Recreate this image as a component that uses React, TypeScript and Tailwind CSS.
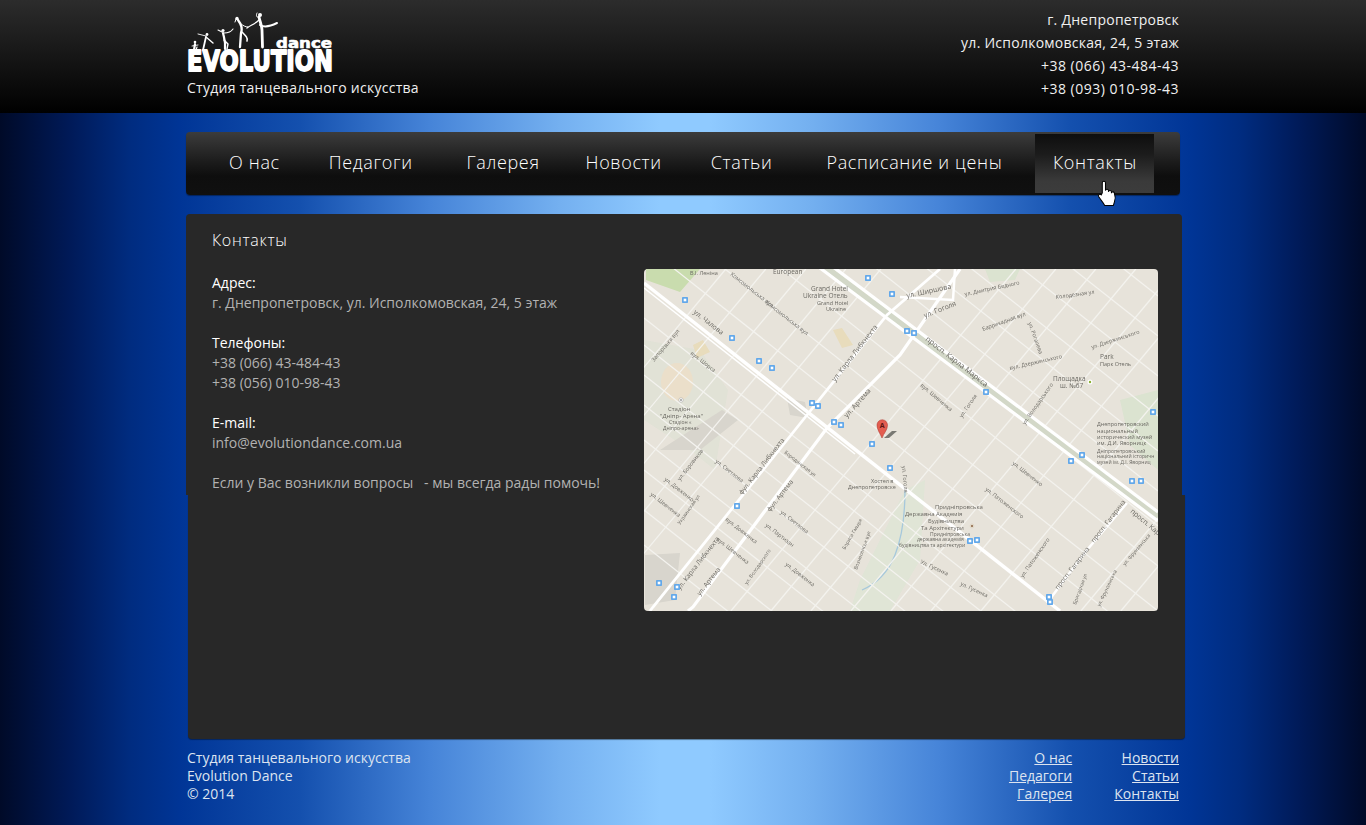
import React from "react";

const famA = [-150,-110,-70,-30,10,45,85,120,160,205,245,318,345,375,405,440,470,510,545];
const famB = [950,990,1030,1070,1105,1240,1280,1320,1360,1400,1440,1490,1590,1630,1670];

const labels: [number, number, number, string, number][] = [
  [690, 275, 0, "В.І. Леніна", 5.5],
  [773, 274, 0, "European", 6.5],
  [811, 291, 0, "Grand Hotel", 6.5],
  [803, 298, 0, "Ukraine Отель", 6.5],
  [817, 305, 0, "Grand Hotel", 5.5],
  [826, 311, 0, "Ukraine", 5.5],
  [693, 313, 38, "ул. Чалова", 7],
  [730, 275, 38, "Комсомольська вул", 5.5],
  [765, 303, 38, "Комсомольська вул", 5.5],
  [654, 362, -50, "Запорізька вул", 5.5],
  [690, 354, 38, "вул. Шорса", 5.5],
  [668, 411, 0, "Стадіон", 6],
  [660, 418, 0, "\"Дніпр- Арена\"", 6],
  [669, 424, 0, "Стадіон «", 5],
  [663, 430, 0, "Дніпро-арена»", 5],
  [835, 382, -52, "ул. Карла Либкнехта", 7],
  [847, 418, -48, "ул. Артема", 7],
  [907, 298, -12, "ул. Ширшова", 7],
  [925, 318, -22, "ул. Гоголя", 7],
  [965, 296, -12, "ул. Дмитрия Бедного", 5.5],
  [1056, 299, -8, "Колодезная ул", 5.5],
  [983, 331, -20, "Баррикадная вул", 5.5],
  [1028, 323, 70, "ул. Рогалева", 5.5],
  [1010, 370, -13, "вул. Дзержинського", 5.5],
  [1092, 349, -18, "ул. Дзержинського", 5.5],
  [1100, 359, 0, "Park", 6.5],
  [1100, 366, 0, "Парк Отель", 5.5],
  [1053, 381, 0, "Площадка", 6.5],
  [1060, 388, 0, "ш. №67", 6.5],
  [925, 340, 38, "просп. Карла Маркса", 7.5],
  [920, 386, 40, "вул. Шевченка", 5.5],
  [962, 418, -55, "ул. Гоголя", 5.5],
  [1025, 425, -55, "ул. Володарського", 5.5],
  [1097, 426, 0, "Днепропетровский", 5.5],
  [1097, 433, 0, "национальный", 5.5],
  [1097, 439, 0, "исторический музей", 5.5],
  [1097, 445, 0, "им. Д.И. Яворницк", 5.5],
  [1097, 453, 0, "Дніпропетровський", 5],
  [1097, 458, 0, "національний історичн", 5],
  [1097, 464, 0, "музей ім. Д.І. Яворниц", 5],
  [680, 481, -52, "ул. Боровиков", 5.5],
  [664, 480, 38, "ул. Довженко", 5.5],
  [650, 495, 38, "ул. Шевченка", 5.5],
  [680, 525, -55, "Украинская ул", 5],
  [715, 462, 38, "ул. Светлова", 5.5],
  [742, 495, -52, "фул. Карла Либкнехта", 6.5],
  [770, 512, -52, "фул. Артема", 6.5],
  [780, 513, 38, "ул. Светлова", 5.5],
  [725, 520, 38, "вул. Довженка", 5.5],
  [680, 590, -52, "ул. Карла Либкнехта", 6.5],
  [700, 596, -52, "ул. Артема", 6.5],
  [765, 526, 38, "ул. Партизан", 5.5],
  [747, 585, -55, "ул. Володарского", 5],
  [785, 565, 38, "ул. Довженка", 5.5],
  [716, 540, 38, "вул. Шевченка", 5.5],
  [784, 453, 38, "Бородинская ул", 5],
  [871, 483, 0, "Хостел в", 5.5],
  [848, 489, 0, "Днепропетровске", 5.5],
  [845, 550, -60, "Бориса Гмыря", 5],
  [857, 570, -70, "Вознесенськ вул", 5],
  [902, 466, 85, "ул. Гоголя", 5.5],
  [1012, 464, 38, "ул. Шевченко", 5.5],
  [985, 490, 38, "ул. Патоженского", 5.5],
  [935, 509, 0, "Придніпровська", 6],
  [905, 516, 0, "Державна Академія", 6],
  [928, 523, 0, "Будівництва", 6],
  [921, 530, 0, "Та Архітектури", 6],
  [930, 536, 0, "Придніпровська", 5],
  [917, 541, 0, "державна академія", 5],
  [899, 547, 0, "будівництва та архітектури", 5],
  [920, 563, 25, "Ул. Гусенка", 5.5],
  [960, 585, 25, "ул. Гусенка", 5.5],
  [1023, 578, -55, "ул. Патоженского", 5.5],
  [1058, 590, -52, "просп. Гагарина", 6.5],
  [1094, 543, -52, "просп. Гагарина", 6.5],
  [1130, 512, 40, "просп. Кар", 7],
  [1076, 605, -70, "Бригадная ул", 5],
  [1100, 607, -65, "ул. Фрунзенська", 5],
  [1125, 566, -50, "ул. Фрунзенська", 5],
];

const stops: [number, number][] = [
  [685,300],[732,338],[759,361],[772,368],[812,403],[818,406],[834,422],[841,425],
  [868,278],[892,294],[907,331],[914,333],[986,392],[1153,412],[872,444],[890,468],
  [737,506],[659,583],[677,587],[674,597],[1082,455],[1071,461],[1132,481],[1141,481],
  [970,541],[977,540],[1049,597],[1050,602],
];

function MapImage() {
  return (
    <svg viewBox="644 269 514 342" className="block w-full h-full">
      <defs>
        <filter id="soft"><feGaussianBlur stdDeviation="0.4" /></filter>
        <clipPath id="map"><rect x="644" y="269" width="514" height="342" /></clipPath>
      </defs>
      <g clipPath="url(#map)">
        <rect x="644" y="269" width="514" height="342" fill="#e7e3da" />
        <g filter="url(#soft)">
          <polygon points="646,269 700,269 680,292 646,280" fill="#c9dcae" />
          <polygon points="644,340 700,350 728,390 715,470 690,450 644,420" fill="#e1e2d6" />
          <ellipse cx="677" cy="382" rx="16" ry="19" fill="#ebdfca" />
          <polygon points="660,450 722,410 738,420 700,450" fill="#d8d5cd" />
          <polygon points="693,345 703,340 710,352 697,358" fill="#e8dcbc" />
          <polygon points="833,330 842,328 853,345 842,348" fill="#e8dcbc" />
          <polygon points="787,398 805,402 808,418 790,415" fill="#d8d5cd" />
          <polygon points="645,555 680,553 675,600 645,605" fill="#d8d5cd" />
          <polygon points="1120,400 1158,390 1158,470 1130,445" fill="#dbe3d0" />
          <polygon points="860,580 905,490 925,480 920,560 890,611 850,611" fill="#e0e5d6" />
          <polygon points="985,269 1020,269 1015,280 990,282" fill="#dbe3d0" />
          <path d="M862 590 Q885 580 895 555 Q905 530 905 490" stroke="#a6c8dc" strokeWidth="1.3" fill="none" />

          {famA.map((y0) => (
            <line key={y0} x1={644} y1={y0} x2={1158} y2={y0 + 0.79 * 514} stroke="#f4f3ef" strokeWidth="1.2" />
          ))}
          {famB.map((c) => (
            <line key={c} x1={c - 269 / 1.2} y1={269} x2={c - 611 / 1.2} y2={611} stroke="#f4f3ef" strokeWidth="1.2" />
          ))}

          <path d="M644 283 L1060 611" stroke="#fff" strokeWidth="3.5" fill="none" />
          <path d="M644 288 L855 454" stroke="#fff" strokeWidth="1.5" fill="none" />
          <path d="M822 265 L1158 517" stroke="#d3d8c8" strokeWidth="7" fill="none" />
          <path d="M820 268 L1158 521" stroke="#fff" strokeWidth="3.2" fill="none" />
          <path d="M828 263 L1158 512" stroke="#fff" strokeWidth="3.2" fill="none" />
          <path d="M960 269 L900 355 L827 428 L693 607 L688 611" stroke="#fff" strokeWidth="3.2" fill="none" />
          <path d="M940 269 L887 315 L787 440 L653 607 L650 611" stroke="#fff" strokeWidth="2.8" fill="none" />
          <path d="M1127 503 L1087 550 L1047 603" stroke="#fff" strokeWidth="2.5" fill="none" />
          <path d="M955 269 L953 300 L900 297" stroke="#fff" strokeWidth="2.5" fill="none" />

          {labels.map(([x, y, r, t, s], i) => (
            <text key={i} x={x} y={y} fontSize={s} fill="#6a6862" fontFamily="Open Sans, sans-serif" transform={r ? `rotate(${r} ${x} ${y})` : undefined}>
              {t}
            </text>
          ))}
          {stops.map(([x, y], i) => (
            <g key={i}>
              <rect x={x - 3} y={y - 3} width="6" height="6" rx="0.8" fill="#62a8ea" />
              <rect x={x - 1.3} y={y - 1.3} width="2.6" height="2.6" fill="#fff" />
            </g>
          ))}
          <circle cx="1090" cy="382" r="2.5" fill="#fff" />
          <circle cx="1090" cy="382" r="1.2" fill="#8ab030" />
          <circle cx="681" cy="400" r="2.2" fill="#fff" stroke="#888" strokeWidth="0.4" />
          <circle cx="681" cy="400" r="0.8" fill="#555" />
          <circle cx="972" cy="526" r="2.4" fill="#e0d8c8" />
          <circle cx="972" cy="526" r="1" fill="#8a6040" />
        </g>
        <polygon points="884,438 892,431 897,431 889,438" fill="#5c5c58" opacity="0.8" />
        <path d="M882 438 C880 433 877 430 877 425 A5 5 0 0 1 887.5 425 C887.5 430 884 433 882 438 Z" fill="#e35d50" stroke="#a83028" strokeWidth="0.5" />
        <text x="882.2" y="428" fontSize="7" fontWeight="700" textAnchor="middle" fill="#5a1410" fontFamily="Open Sans, sans-serif">A</text>
      </g>
    </svg>
  );
}

function Logo() {
  return (
    <svg viewBox="186 12 148 61" className="block w-[148px] h-[61px]" fill="#fff" stroke="#fff" strokeLinecap="round" strokeLinejoin="round">
      <g fill="none">
        <path d="M259 17 C260 22 262 26 262 30 L262.5 47" strokeWidth="2.8" />
        <path d="M260 25 C265 28 271 26 277 23" strokeWidth="2" />
        <path d="M259 20 C255 24 251 25 247 28" strokeWidth="1.3" />
        <path d="M259 18 C256 17 256 15 257 13" strokeWidth="1" />
        <path d="M238 20 C241 24 243 28 241 33 L240 47" strokeWidth="2.3" />
        <path d="M242 32 C246 36 248 38 247 41" strokeWidth="1.6" />
        <path d="M240 23 C243 26 246 27 248 27" strokeWidth="1" />
        <path d="M236 19 L235 22" strokeWidth="1" />
        <path d="M223 33 C224 38 226 42 225 49" strokeWidth="2.2" />
        <path d="M224 33 C228 33 231 32 233 29" strokeWidth="1.1" />
        <path d="M222 32 L218 30" strokeWidth="1.1" />
        <path d="M224 40 L228 44 L227 49" strokeWidth="1.4" />
        <path d="M206 37 C205 41 204 46 203 50" strokeWidth="1.8" />
        <path d="M206 37 L213 43" strokeWidth="1.4" />
        <path d="M206 36 L198 34" strokeWidth="0.9" />
        <path d="M195 44 L194 50" strokeWidth="2.2" />
        <path d="M192 46 L198 45" strokeWidth="0.9" />
        <path d="M196 50 L197 47" strokeWidth="1.2" />
      </g>
      <circle cx="260" cy="15" r="2" stroke="none" />
      <circle cx="237" cy="18.5" r="1.7" stroke="none" />
      <circle cx="223" cy="30.5" r="1.6" stroke="none" />
      <circle cx="207" cy="34.5" r="1.4" stroke="none" />
      <circle cx="195" cy="42" r="1.3" stroke="none" />
      <text x="276" y="47.5" fontSize="13.5" fontWeight="700" fontFamily="DejaVu Sans, sans-serif" stroke="#fff" strokeWidth="0.6" textLength="56" lengthAdjust="spacingAndGlyphs">dance</text>
      <text x="187" y="70.8" fontSize="28" fontWeight="700" fontFamily="DejaVu Sans, sans-serif" stroke="#fff" strokeWidth="1.8" textLength="146" lengthAdjust="spacingAndGlyphs">EVOLUTION</text>
    </svg>
  );
}

function Hand() {
  return (
    <svg viewBox="1097 180 21 28" className="absolute left-[910px] top-[46px] w-[24px] h-[32px]">
      <path
        d="M1102.5 193 V184.2 a1.4 1.4 0 0 1 2.8 0 V191 a1.3 1.3 0 0 1 2.6 .3 v.8 a1.3 1.3 0 0 1 2.6 .3 v.9 a1.3 1.3 0 0 1 2.6 .3 c.8 2 .8 5 .1 7 l-1 3.4 h-7.6 c-1-2.2-3.6-5-5.2-7.6 c-.9-1.6 .9-2.8 2.2-1.6 z"
        fill="#fff"
        stroke="#000"
        strokeWidth="0.9"
      />
    </svg>
  );
}

const nav: [string, string][] = [
  ["О нас", "ml-[43px]"],
  ["Педагоги", "ml-[49px]"],
  ["Галерея", "ml-[54px]"],
  ["Новости", "ml-[46px]"],
  ["Статьи", "ml-[49px]"],
  ["Расписание и цены", "ml-[54px]"],
];

export default function App() {
  return (
    <div className="relative min-h-[825px] w-full overflow-hidden font-['Open_Sans',sans-serif] bg-[linear-gradient(to_right,#000a28_0px,#001a58_70px,#002c80_130px,#003596_180px,#1450ae_300px,#4684d8_430px,#74b0f0_560px,#8fcaff_660px,#8fcaff_710px,#74b0f0_810px,#4684d8_940px,#1450ae_1070px,#003596_1190px,#002c80_1240px,#001a58_1300px,#000a28_1366px)]">
      <header className="h-[113px] bg-[linear-gradient(to_bottom,#2c2c2c,#000000)]">
        <div className="mx-auto flex w-[994px] justify-between">
          <div className="pt-[12px]">
            <Logo />
            <div className="mt-[4px] pl-[1px] text-[14px] leading-[22px] tracking-[0.27px] text-[#f0f0f0]">Студия танцевального искусства</div>
          </div>
          <div className="pr-[1px] pt-[8px] text-right text-[14px] leading-[23px] tracking-[0.25px] text-[#f0f0f0]">
            <div>г. Днепропетровск</div>
            <div>ул. Исполкомовская, 24, 5 этаж</div>
            <div className="tracking-[0.5px]">+38 (066) 43-484-43</div>
            <div className="tracking-[0.5px]">+38 (093) 010-98-43</div>
          </div>
        </div>
      </header>

      <div className="mx-auto w-[994px]">
        <nav className="relative mt-[19px] flex h-[63px] items-center rounded-[4px] bg-[linear-gradient(to_bottom,#3c3c3c_0%,#1a1a1a_50%,#0e0e0e_70%,#101010_100%)] text-[18px] font-light tracking-[0.65px] text-white shadow-[0_1px_1px_rgba(0,0,0,0.4)]">
          {nav.map(([t, m]) => (
            <a key={t} className={`${m} pb-[2px]`}>{t}</a>
          ))}
          <a className="ml-[33px] flex h-[59px] w-[119px] items-center justify-center bg-[linear-gradient(to_bottom,#0e0e0e_0%,#1c1c1c_35%,#3a3a3a_80%,#3c3c3c_100%)] pb-[2px]">Контакты</a>
          <Hand />
        </nav>

        <main className="mt-[19px]">
          <section className="h-[281px] w-[996px] rounded-t-[4px] bg-[#282828] pl-[26px] pr-[24px] pt-[15px]">
            <h1 className="text-[16px] font-light leading-[22px] tracking-[0.7px] text-white">Контакты</h1>
            <div className="mt-[18px] flex justify-between">
              <div className="pt-[4px] text-[14px] leading-[20px] text-[#b2b2b2]">
                <div className="text-white">Адрес:</div>
                <div>г. Днепропетровск, ул. Исполкомовская, 24, 5 этаж</div>
                <div className="mt-[20px] text-white">Телефоны:</div>
                <div>+38 (066) 43-484-43</div>
                <div>+38 (056) 010-98-43</div>
                <div className="mt-[20px] text-white">E-mail:</div>
                <div>info@evolutiondance.com.ua</div>
                <div className="mt-[20px] whitespace-pre">Если у Вас возникли вопросы   - мы всегда рады помочь!</div>
              </div>
              <div className="relative h-[342px] w-[514px] overflow-hidden rounded-[4px]">
                <MapImage />
              </div>
            </div>
          </section>
          <div className="ml-[2px] h-[244px] w-[997px] rounded-b-[4px] bg-[#282828] shadow-[0_1px_1px_rgba(0,0,0,0.4)]" />
        </main>

        <footer className="mt-[10px] flex justify-between pl-[1px] pr-[1px] text-[14px] leading-[18px] text-[#dde4f0]">
          <div>
            <div>Студия танцевального искусства</div>
            <div>Evolution Dance</div>
            <div>© 2014</div>
          </div>
          <div className="flex gap-[42px] text-right underline">
            <div className="flex flex-col">
              <a>О нас</a>
              <a>Педагоги</a>
              <a>Галерея</a>
            </div>
            <div className="flex flex-col">
              <a>Новости</a>
              <a>Статьи</a>
              <a>Контакты</a>
            </div>
          </div>
        </footer>
      </div>
    </div>
  );
}
